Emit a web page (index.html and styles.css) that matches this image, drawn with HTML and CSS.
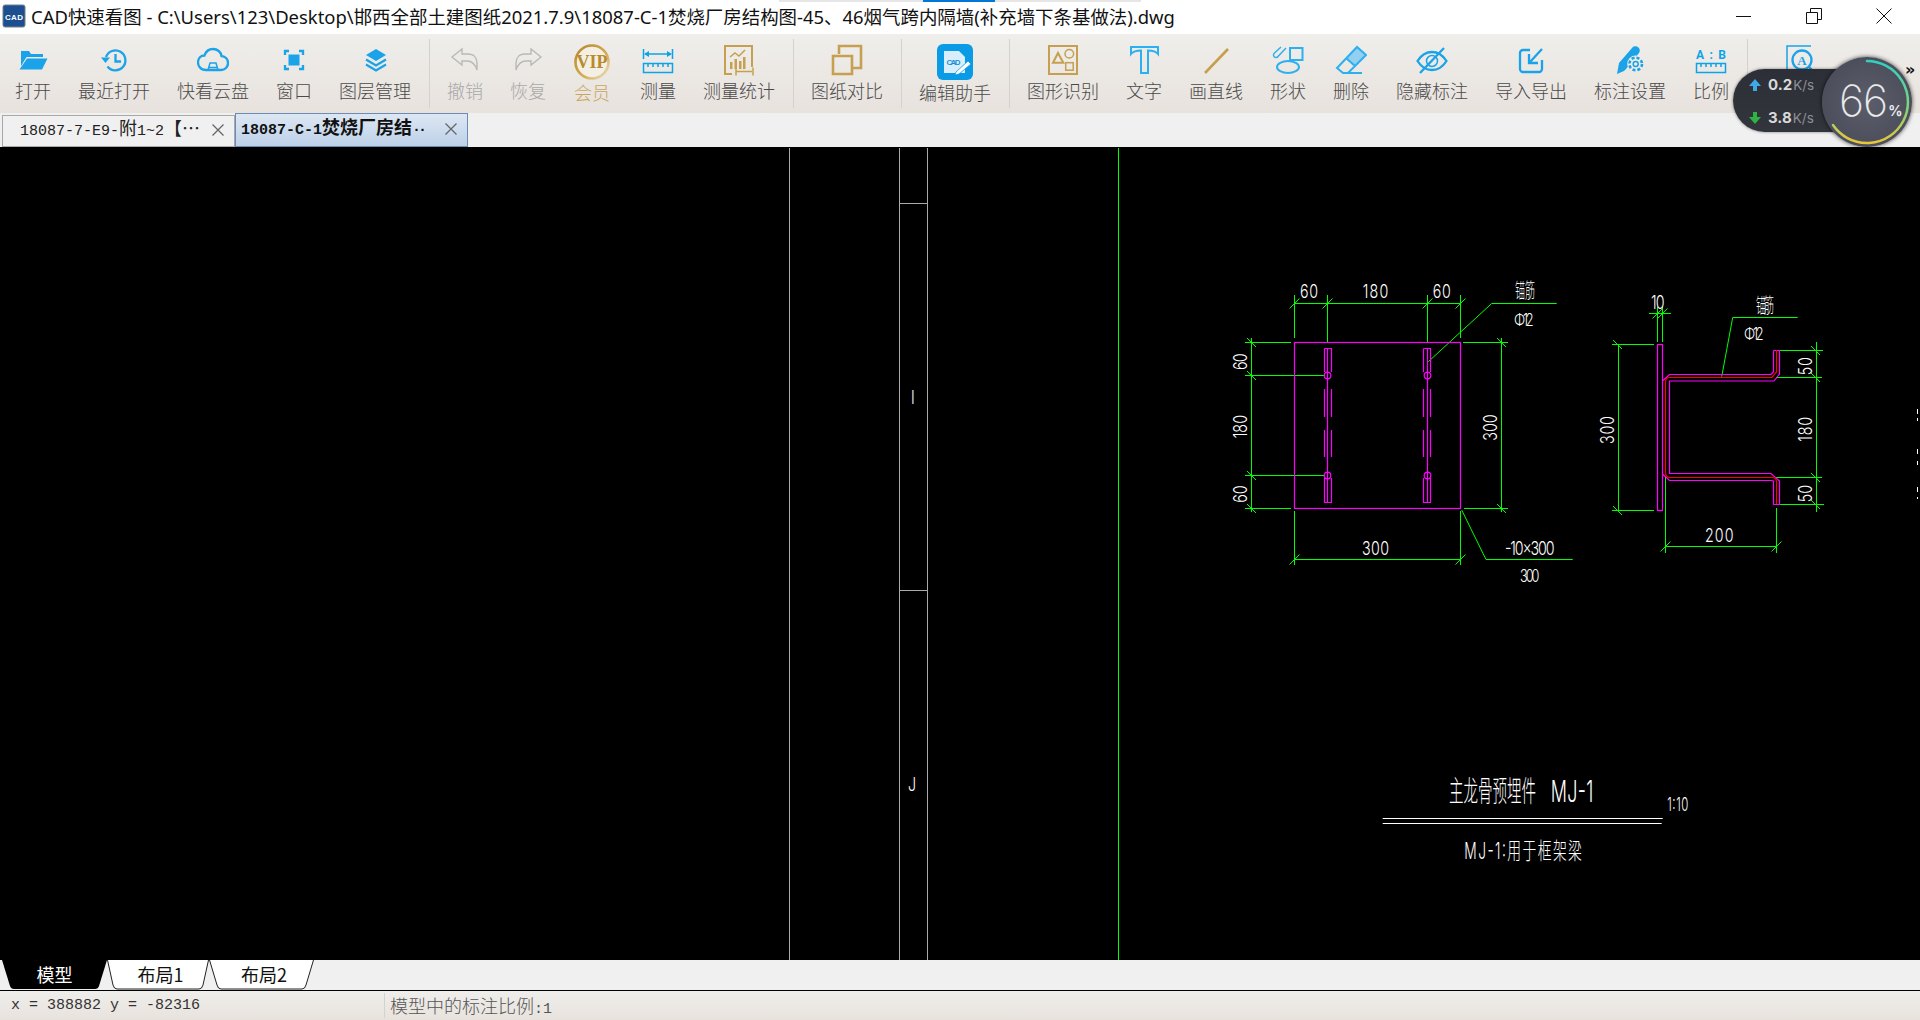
FILE: index.html
```html
<!DOCTYPE html>
<html lang="zh">
<head>
<meta charset="utf-8">
<title>CAD快速看图</title>
<link rel="stylesheet" href="styles.css">
</head>
<body>
<div class="app">
  <header class="titlebar">
    <svg class="appicon" width="24" height="24" viewBox="0 0 24 24"><rect x="1" y="1" width="22" height="22" rx="2" fill="#1c4f8f" stroke="#74808c"/><text x="12" y="16" class="appicon-t" textLength="18">CAD</text></svg>
    <div class="title">CAD快速看图 - C:\Users\123\Desktop\邯西全部土建图纸2021.7.9\18087-C-1焚烧厂房结构图-45、46烟气跨内隔墙(补充墙下条基做法).dwg</div>
    <div class="winctl">
      <svg width="16" height="16" viewBox="0 0 16 16"><path d="M0 8.500H15" class="wc"/></svg>
      <svg width="16" height="16" viewBox="0 0 16 16"><path d="M.5 4.500H11.500V15.500H.5zM4.500 4.500V.5H15.500V11.500H11.500" class="wc"/></svg>
      <svg width="16" height="16" viewBox="0 0 16 16"><path d="M.5 .5L15.500 15.500M15.500 .5L.5 15.500" class="wc"/></svg>
    </div>
  </header>

  <nav class="toolbar">
    <div class="tool"><svg class="ic" width="32" height="36" viewBox="0 0 32 36"><path d="M4 7h8l2 3h12v3H9.500L4 22z" class="fb"/><path d="M10 14.500H30.500L25 25.500H2.500z" class="fb"/></svg><span>打开</span></div>
    <div class="tool"><svg class="ic" width="32" height="36" viewBox="0 0 32 36"><path d="M8 13A10 10 0 1 1 9.500 22.500" class="sb"/><path d="M3 13.500H12L7.500 19z" class="fb"/><path d="M17.500 10V17.500H23" class="sb"/></svg><span>最近打开</span></div>
    <div class="tool"><svg class="ic" width="32" height="36" viewBox="0 0 32 36"><path d="M9 26C3 26 1 21 1 18.500C1 14 4 11.500 7.500 11.500C9 7 12.500 5 16 5C20.500 5 24 8 24.500 12C28.500 12.500 31 15.500 31 19C31 23 28 26 24 26Z" class="sb"/><path d="M11 26l2-7h6l2 7M12 23.500h8" class="sb thin"/></svg><span>快看云盘</span></div>
    <div class="tool"><svg class="ic" width="32" height="36" viewBox="0 0 32 36"><path d="M7 11V7H11M21 7H25V11M25 21V25H21M11 25H7V21" class="sb"/><rect x="10.500" y="10.500" width="11" height="11" class="fb"/></svg><span>窗口</span></div>
    <div class="tool"><svg class="ic" width="32" height="36" viewBox="0 0 32 36"><path d="M17 5L27 11L17 17L7 11z" class="fb"/><path d="M7 15.500l10 6 10-6M7 20.500l10 6 10-6" class="sb"/></svg><span>图层管理</span></div>
    <i class="sep"></i>
    <div class="tool off"><svg class="ic" width="32" height="36" viewBox="0 0 32 36"><path d="M3 13L13 5V10H19C25 10 28 14 28 19V26C26 20 22 17 18 17H13V21Z" class="sg"/></svg><span>撤销</span></div>
    <div class="tool off"><svg class="ic" width="32" height="36" viewBox="0 0 32 36"><path d="M29 13L19 5V10H13C7 10 4 14 4 19V26C6 20 10 17 14 17H19V21Z" class="sg"/></svg><span>恢复</span></div>
    <div class="tool gold low"><svg class="ic" width="36" height="36" viewBox="0 0 36 36"><defs><linearGradient id="vipg" x1="0" y1="0" x2="1" y2="1"><stop offset="0" stop-color="#b8862c"/><stop offset=".6" stop-color="#d4ad55"/><stop offset="1" stop-color="#ece0c4"/></linearGradient></defs><circle cx="18" cy="18" r="16.500" class="vipring"/><text x="18" y="24" class="vip" textLength="31" lengthAdjust="spacingAndGlyphs">VIP</text></svg><span>会员</span></div>
    <div class="tool"><svg class="ic" width="32" height="36" viewBox="0 0 32 36"><path d="M1.500 5V15M30.500 5V15M3 10H29" class="sc thin"/><path d="M2 10L7 7V13zM30 10L25 7V13z" class="fc"/><path d="M1.500 19.500H30.500V28.500H1.500zM6 19.500V23M11 19.500V23M16 19.500V23M21 19.500V23M26 19.500V23" class="sc thin"/></svg><span>测量</span></div>
    <div class="tool"><svg class="ic" width="32" height="36" viewBox="0 0 32 36"><path d="M9 30H2V2H29V23" class="sy"/><path d="M7 18h2.500v7H7zM11.500 15h2.500v10h-2.500zM16 17h2.500v8H16zM20 13h2.500v12H20z" class="fy"/><path d="M7 13l5-4 4 3 6-6" class="sy thin"/><path d="M13 27.500H29M13 23.500v8M30 23.500v8" class="sy thin"/></svg><span>测量统计</span></div>
    <i class="sep"></i>
    <div class="tool"><svg class="ic" width="32" height="36" viewBox="0 0 32 36"><path d="M8 10V2H30V24H22" class="sy wide"/><path d="M2 12H21V30H2z" class="sy wide"/></svg><span>图纸对比</span></div>
    <i class="sep"></i>
    <div class="tool low"><svg class="ic" width="36" height="36" viewBox="0 0 36 36"><rect width="36" height="36" rx="6" class="edit"/><path d="M7 7H22L28 13V29H7z" class="docw"/><text x="16.500" y="20.500" class="cadmini" textLength="14">CAD</text><path d="M19 28L31 17L34 20L22 30L18 31z" class="penw"/></svg><span>编辑助手</span></div>
    <i class="sep"></i>
    <div class="tool"><svg class="ic" width="32" height="36" viewBox="0 0 32 36"><rect x="2" y="2" width="28" height="28" class="sy"/><path d="M6 18.700L11 9L16.300 18.700z" class="sy"/><circle cx="22.300" cy="9.800" r="4.300" class="sy thin"/><rect x="18.700" y="18.700" width="7.500" height="7.500" class="sy thin"/></svg><span>图形识别</span></div>
    <div class="tool"><svg class="ic" width="32" height="36" viewBox="0 0 32 36"><path d="M3 3H30V10C28 7.500 26 6.500 20 6.500V29H13V6.500C7 6.500 5 7.500 3 10Z" class="sb lt"/></svg><span>文字</span></div>
    <div class="tool"><svg class="ic" width="32" height="36" viewBox="0 0 32 36"><path d="M5 29L28 5" class="sy wide"/></svg><span>画直线</span></div>
    <div class="tool"><svg class="ic" width="32" height="36" viewBox="0 0 32 36"><rect x="18" y="4" width="12.500" height="12" class="sb lt"/><ellipse cx="16" cy="23" rx="11" ry="6" class="sb lt"/><path d="M14 4L6 12.500a2.500 2.500 0 1 1-3.500-3.500L9 3" class="sb lt thin"/></svg><span>形状</span></div>
    <div class="tool"><svg class="ic" width="32" height="36" viewBox="0 0 32 36"><path d="M11 14L22 3L31 11L20 22z" class="fhatch"/><path d="M2 24L22 3L31 11L13 29H8zM13 29H27M11 14L20 22" class="sb lt"/></svg><span>删除</span></div>
    <div class="tool"><svg class="ic" width="32" height="36" viewBox="0 0 32 36"><path d="M1.500 17C6 10 11 8 16 8C21 8 26 10 30.500 17C26 24 21 26 16 26C11 26 6 24 1.500 17Z" class="sb"/><circle cx="16" cy="17" r="5.500" class="sb thin"/><path d="M4 29L28 4" class="sb"/></svg><span>隐藏标注</span></div>
    <div class="tool"><svg class="ic" width="32" height="36" viewBox="0 0 32 36"><path d="M15 6H8a3 3 0 0 0-3 3V25a3 3 0 0 0 3 3H24a3 3 0 0 0 3-3V16" class="sb"/><path d="M27 5L15 18M14 10V19H23" class="sb"/></svg><span>导入导出</span></div>
    <div class="tool"><svg class="ic" width="32" height="36" viewBox="0 0 32 36"><path d="M3 30L5 19L18 4a3.500 3.500 0 0 1 7 5L12 25L10 27z" class="fb"/><circle cx="21.700" cy="20" r="8.500" class="gear"/><circle cx="21.700" cy="20" r="6.300" class="sb cog"/><circle cx="21.700" cy="20" r="2.500" class="sb thin"/></svg><span>标注设置</span></div>
    <div class="tool"><svg class="ic" width="32" height="36" viewBox="0 0 32 36"><text x="1" y="15" class="ab" textLength="30">A:B</text><path d="M1.500 19.500H30.500V28.500H1.500zM6 19.500V23M11 19.500V23M16 19.500V23M21 19.500V23M26 19.500V23" class="sc thin"/></svg><span>比例</span></div>
    <i class="sep"></i>
    <div class="tool"><svg class="ic" width="32" height="36" viewBox="0 0 32 36"><path d="M26 2H2V26" class="sb thin"/><circle cx="17" cy="16" r="9.500" class="sb"/><path d="M24 23L30 29" class="sb"/><text x="17" y="20.500" class="aletter">A</text></svg><span>文字查找</span></div>
  </nav>

  <div class="doctabs">
    <div class="doctab"><span class="dt-text"><b class="m">18087-7-E9-</b>附<b class="m">1~2</b>【…</span><svg class="close" width="12" height="12" viewBox="0 0 12 12"><path d="M.5 .5L11.500 11.500M11.500 .5L.5 11.500"/></svg></div>
    <div class="doctab active"><span class="dt-text"><b class="m">18087-C-1</b>焚烧厂房结<b class="m dots">··</b></span><svg class="close" width="12" height="12" viewBox="0 0 12 12"><path d="M.5 .5L11.500 11.500M11.500 .5L.5 11.500"/></svg></div>
  </div>

  <main class="canvas">
    <svg class="drawing" width="1920" height="813" viewBox="0 147 1920 813">
      <defs><path id="tk" d="M-5 5L5-5"/></defs>
      <g class="gray">
        <path d="M789.500 148V960M899.500 148V960M927.500 148V960M900 203.500H927M900 590.500H927"/>
      </g>
      <path class="green" d="M1118.500 148V960"/>
      <text class="cad" transform="translate(911 404) scale(.75 1)" >I</text>
      <text class="cad" transform="translate(908 791) scale(.75 1)" >J</text>

      <g class="green">
        <path d="M1294.500 303.500H1460.500M1294.500 295V338M1327.500 295V342M1427.500 295V342M1460.500 295V338"/>
        <path d="M1251.500 338V512M1245 342.500H1291M1245 375.500H1325M1245 475.500H1325M1245 508.500H1291"/>
        <path d="M1501.500 338V512M1463 342.500H1508M1464 508.500H1508"/>
        <path d="M1294.500 511V565M1460.500 511V565M1294.500 559.500H1460.500"/>
        <path d="M1428.300 361.700L1491.700 303.500H1556.700M1461.700 510L1486 559.500H1572.700"/>
        <use href="#tk" x="1294.500" y="303.500"/><use href="#tk" x="1327.500" y="303.500"/><use href="#tk" x="1427.500" y="303.500"/><use href="#tk" x="1460.500" y="303.500"/>
        <use href="#tk" x="1294.500" y="559.500"/><use href="#tk" x="1460.500" y="559.500"/>
        <path d="M1247 338L1256 347M1247 371L1256 380M1247 471L1256 480M1247 504L1256 513M1497 338L1506 347M1497 504L1506 513"/>
      </g>
      <g class="magenta">
        <rect x="1294.500" y="342.500" width="166" height="166"/>
        <path d="M1324.500 348.500H1331.500V372M1324.500 348.500V372M1324.500 478V502.500H1331.500V478M1327.500 348V502M1324.500 389V417M1331.500 389V417M1324.500 430V457M1331.500 430V457"/>
        <path d="M1423.500 348.500H1430.500V372M1423.500 348.500V372M1423.500 478V502.500H1430.500V478M1427.500 348V502M1423.500 389V417M1430.500 389V417M1423.500 430V457M1430.500 430V457"/>
        <circle cx="1327.500" cy="375.500" r="3.300"/><circle cx="1327.500" cy="475.500" r="3.300"/>
        <circle cx="1427.500" cy="375.500" r="3.300"/><circle cx="1427.500" cy="475.500" r="3.300"/>
      </g>
      <g class="cad">
        <text transform="translate(1300 298) scale(.75 1)" textLength="24">60</text>
        <text transform="translate(1362.700 298) scale(.75 1)" textLength="34">180</text>
        <text transform="translate(1432.700 298) scale(.75 1)" textLength="24">60</text>
        <text transform="translate(1515 298) scale(.5 1)" textLength="40" class="cjk">锚筋</text>
        <text transform="translate(1514 325.700) scale(.75 1)" textLength="26" class="sm">Φ12</text>
        <text transform="translate(1246.700 370) rotate(-90) scale(.75 1)" textLength="22">60</text>
        <text transform="translate(1246.700 438.300) rotate(-90) scale(.75 1)" textLength="31">180</text>
        <text transform="translate(1246.700 502.700) rotate(-90) scale(.75 1)" textLength="23">60</text>
        <text transform="translate(1496.700 440.700) rotate(-90) scale(.75 1)" textLength="35">300</text>
        <text transform="translate(1362 555) scale(.75 1)" textLength="36">300</text>
        <text transform="translate(1505 555) scale(.75 1)" textLength="66">-10x300</text>
        <text transform="translate(1520 581.700) scale(.75 1)" textLength="26" class="sm">300</text>
      </g>

      <g class="green">
        <path d="M1649 313.500H1671M1657.500 307V342M1662.500 307V342"/>
        <use href="#tk" x="1657.500" y="313.500"/><use href="#tk" x="1662.500" y="313.500"/>
        <path d="M1618.500 344V511M1612 344.500H1654M1612 510.500H1654"/>
        <path d="M1613 340L1622 349M1613 506L1622 515"/>
        <path d="M1816.500 342V512M1776 350.500H1823M1776 377.500H1822M1776 477.500H1822M1780 504.500H1824"/>
        <path d="M1811 346L1820 355M1811 373L1820 382M1811 473L1820 482M1811 500L1820 509"/>
        <path d="M1665.500 477V553M1776.500 508V553M1665.500 546.500H1776.500"/>
        <use href="#tk" x="1665.500" y="546.500"/><use href="#tk" x="1776.500" y="546.500"/>
        <path d="M1721.700 376.700L1732.700 317.500H1797.700"/>
      </g>
      <g class="magenta">
        <rect x="1657.500" y="344.500" width="5" height="166"/>
        <path d="M1773.500 350.500H1779.500V374L1774 381H1669.500V473.500H1771L1779.500 481V504.500H1773.500V481L1771 480.500H1669.500L1662.500 474M1773.500 350.500V372L1771 374.500H1669.500L1662.500 381"/>
      </g>
      <path class="red" d="M1776.500 350V372L1772 377.500H1670C1667 377.500 1665.500 379 1665.500 382V472C1665.500 475.500 1667 477.500 1670 477.500H1772C1775 477.500 1776.500 479 1776.500 482V504"/>
      <g class="cad">
        <text transform="translate(1651 309.300) scale(.75 1)" textLength="18">10</text>
        <text transform="translate(1756 312.700) scale(.5 1)" textLength="36" class="cjk">锚筋</text>
        <text transform="translate(1744 340) scale(.75 1)" textLength="26" class="sm">Φ12</text>
        <text transform="translate(1614 444) rotate(-90) scale(.75 1)" textLength="37">300</text>
        <text transform="translate(1705 541.700) scale(.75 1)" textLength="38">200</text>
        <text transform="translate(1811.700 375.300) rotate(-90) scale(.75 1)" textLength="24">50</text>
        <text transform="translate(1811.700 441.700) rotate(-90) scale(.75 1)" textLength="33">180</text>
        <text transform="translate(1811.700 502.300) rotate(-90) scale(.75 1)" textLength="23">50</text>
      </g>
      <path class="white" d="M1917.500 409V414M1917.500 418V421M1917.500 449V454M1917.500 461V465M1917.500 487V492M1917.500 497V499"/>

      <path class="white" d="M1382.700 818.500H1662.700M1382.700 823.500H1661.700"/>
      <g class="cad">
        <text transform="translate(1449 802) scale(.5 1)" textLength="174" class="big cjk">主龙骨预埋件</text>
        <text transform="translate(1550.700 802) scale(.6 1)" textLength="71" class="big">MJ-1</text>
        <text transform="translate(1667.300 810.700) scale(.6 1)" textLength="35">1:10</text>
        <text transform="translate(1464.300 859) scale(.6 1)" textLength="196" class="mid">MJ-1:用于框架梁</text>
      </g>
    </svg>
  </main>

  <div class="sheettabs">
    <div class="sheet s1"><svg class="sheet-bg" width="105" height="30" viewBox="0 0 105 30"><path d="M0 0H105L97 26Q96 29 93 29H12Q9 29 8 26Z" class="sh-black"/></svg><span class="lbl on">模型</span></div>
    <div class="sheet s2"><svg class="sheet-bg" width="102" height="30" viewBox="0 0 102 30"><path d="M.5 0L6 25Q7 29 10 29H92Q95 29 96 25L101.500 0" class="sh-white"/></svg><span class="lbl">布局1</span></div>
    <div class="sheet s3"><svg class="sheet-bg" width="105" height="30" viewBox="0 0 105 30"><path d="M.5 0L8 25Q9 29 12 29H93Q96 29 97 25L104.500 0" class="sh-white"/></svg><span class="lbl">布局2</span></div>
  </div>

  <footer class="status">
    <div class="coords">x = 388882 y = -82316</div>
    <div class="scale">模型中的标注比例<b class="m">:1</b></div>
  </footer>

  <div class="more">»</div>
  <aside class="speed">
    <div class="rate"><svg width="14" height="14" viewBox="0 0 14 14"><path d="M7 1L13 8H9V13H5V8H1z" class="up"/></svg><b>0.2</b><small>K/s</small></div>
    <div class="rate"><svg width="14" height="14" viewBox="0 0 14 14"><path d="M7 13L13 6H9V1H5V6H1z" class="down"/></svg><b>3.8</b><small>K/s</small></div>
    <div class="dial">
      <svg width="90" height="90" viewBox="0 0 90 90">
        <defs><linearGradient id="arc" x1="0" y1="0" x2="0" y2="1"><stop offset="0" stop-color="#30d0c0"/><stop offset=".55" stop-color="#7cd67c"/><stop offset="1" stop-color="#e8c63a"/></linearGradient></defs>
        <path d="M45 4A41 41 0 1 1 11 68" class="arc"/>
      </svg>
      <div class="pct">66<small>%</small></div>
    </div>
  </aside>
</div>
</body>
</html>
```

FILE: styles.css
```css
* { box-sizing: border-box; }
html, body { margin: 0; padding: 0; }
body { width: 1920px; height: 1020px; overflow: hidden; background: #f0f0f0; }
.app { position: relative; display: flex; flex-direction: column; width: 1920px; height: 1020px; font-family: "Liberation Serif", "Noto Sans CJK SC", serif; }
b { font-weight: inherit; }

.titlebar { height: 34px; flex: none; display: flex; align-items: center; background: #fff; padding-left: 2px; padding-bottom: 2px; position: relative; }
.titlebar::before { content: ""; position: absolute; left: 779px; top: 0; width: 362px; height: 2px; background: linear-gradient(90deg, #e6e6e6 0 144px, #0078d7 144px 216px, #e6e6e6 216px); }
.appicon { flex: none; }
.appicon-t { font: 700 8px "Liberation Sans", sans-serif; fill: #fff; text-anchor: middle; }
.title { margin-left: 5px; font: 18.45px "Noto Sans", "Noto Sans CJK SC", sans-serif; color: #111; white-space: nowrap; flex: 1; }
.winctl { display: flex; gap: 54px; padding-right: 28px; align-items: center; }
.wc { fill: none; stroke: #111; stroke-width: 1; }

.toolbar { height: 79px; flex: none; display: flex; padding-left: 1.5px; background: linear-gradient(180deg, #efeeeb, #e8e2dd); }
.tool { flex: none; display: flex; flex-direction: column; align-items: center; padding: 10px 13.5px 0; font-size: 18px; line-height: 18px; color: #4a4a4a; font-family: "Noto Sans CJK SC", sans-serif; font-weight: 300; }
.tool span { margin-top: 1px; white-space: nowrap; }
.tool.low span { margin-top: 3px; }
.tool.off { color: #a9a9a9; }
.tool.gold { color: #c9a55e; margin-left: 1px; margin-right: 3px; }
.ic { display: block; flex: none; }
.sep { flex: none; width: 1px; height: 69px; margin: 5px 4px 0; background: #d4d2cf; }

.fb { fill: #1aa3e8; }
.sb { fill: none; stroke: #1aa3e8; stroke-width: 2.3; }
.sb.lt { stroke: #2cb0ef; stroke-width: 2; }
.sb.thin, .sc.thin, .sy.thin { stroke-width: 1.5; }
.sb.cog { stroke-width: 2.6; stroke-dasharray: 3 1.95; }
.sc { fill: none; stroke: #0aa5e8; stroke-width: 2; }
.fc { fill: #0aa5e8; }
.sg { fill: none; stroke: #b9b9b9; stroke-width: 1.4; }
.sy { fill: none; stroke: #c6a050; stroke-width: 2; }
.sy.wide { stroke-width: 2.6; }
.fy { fill: #c6a050; }
.vipring { fill: #f4efe4; stroke: url(#vipg); stroke-width: 2.6; }
.vip { font: 700 18px "Liberation Serif", serif; fill: #b98b2c; text-anchor: middle; }
.edit { fill: #0a9be6; }
.docw { fill: #d9eefb; }
.cadmini { font: 700 8px "Liberation Sans", sans-serif; fill: #1a8fd8; text-anchor: middle; }
.penw { fill: #fff; stroke: #0a9be6; stroke-width: .8; }
.fhatch { fill: #93cff0; }
.gear { fill: #eeebe7; }
.ab { font: 700 12px "Roboto", sans-serif; fill: #0aa5e8; }
.aletter { font: 700 13px "Liberation Serif", serif; fill: #1aa3e8; text-anchor: middle; }

.doctabs { height: 34px; flex: none; display: flex; align-items: flex-end; padding-left: 2px; background: #f0f0f0; }
.doctab { width: 233px; height: 32px; display: flex; align-items: center; justify-content: space-between; padding: 0 10px 3px 17px; background: #f0f0f0; border: 1px solid #a8a8a8; font-family: "Noto Sans CJK SC", serif; font-size: 18px; line-height: 24px; color: #222; white-space: nowrap; }
.doctab .m { font-family: "Liberation Mono", monospace; font-size: 15px; }
.doctab .m.dots { letter-spacing: -3px; }
.doctab.active { height: 34px; padding: 0 10px 3px 5px; background: linear-gradient(180deg, #dde7f3, #bdd1e9); border-color: #6c8cb8; font-weight: 700; color: #111; }
.close { flex: none; }
.close path { fill: none; stroke: #666; stroke-width: 1.3; }
.dt-text { overflow: hidden; }

.canvas { height: 813px; flex: none; background: #000; overflow: hidden; }
.drawing { display: block; }
.gray path { fill: none; stroke: #aaa; stroke-width: 1; }
.green, .green path, .green use { fill: none; stroke: #00ff00; stroke-width: 1; }
.magenta rect, .magenta path, .magenta circle { fill: none; stroke: #ff00ff; stroke-width: 1.2; }
.red { fill: none; stroke: #ff0000; stroke-width: 1.2; }
.white { fill: none; stroke: #fff; stroke-width: 1; }
.cad, .cad text { font: 300 19px "Inter", "Noto Sans CJK SC", sans-serif; fill: #fff; }
.cad text.sm { font-size: 17px; }
.cad text.mid { font-size: 23px; }
.cad text.big { font-size: 30px; }
.cad text.cjk { font-size: 20px; font-family: "Noto Sans CJK SC", sans-serif; }
.cad text.big.cjk { font-size: 29px; }

.sheettabs { height: 31px; flex: none; display: flex; padding-left: 2px; background: #f0f0f0; border-bottom: 1px solid #000; }
.sheet { position: relative; display: flex; align-items: center; justify-content: center; height: 30px; font: 18px "Noto Sans CJK SC", sans-serif; color: #111; padding-bottom: 2px; }
.s1 { width: 105px; }
.s2, .s3 { padding-left: 5px; }
.s2 { width: 102px; }
.s3 { width: 105px; }
.sheet-bg { position: absolute; left: 0; top: 0; }
.sh-black { fill: #000; }
.sh-white { fill: #fff; stroke: #222; stroke-width: 1; }
.lbl { position: relative; line-height: 28px; }
.lbl.on { color: #fff; }

.status { height: 29px; flex: none; display: flex; align-items: center; background: linear-gradient(180deg, #efeeeb, #e8e2dd); }
.coords { width: 385px; height: 25px; padding-left: 11px; font: 15px/25px "Liberation Mono", monospace; color: #333; border-right: 1px solid #d4d2cf; }
.scale { padding-left: 5px; font: 18px/25px "Noto Sans CJK SC", sans-serif; font-weight: 300; color: #555; }
.scale .m { font: 15px "Liberation Mono", monospace; }

.more { position: absolute; left: 1905px; top: 60px; font: 700 16px "DejaVu Sans", sans-serif; color: #111; }
.speed { position: absolute; left: 1733px; top: 69px; width: 140px; height: 63px; padding: 5px 0 0 15px; border-radius: 32px 0 0 32px; background: linear-gradient(180deg, #2c2f37, #33353c); box-shadow: 0 0 3px rgba(0,0,0,.5); display: flex; flex-direction: column; gap: 12px; font-family: "Inter", "Roboto", sans-serif; }
.rate { display: flex; align-items: center; height: 21px; }
.rate svg { margin-right: 6px; }
.rate b { font-size: 15px; font-weight: 700; color: #d9d9d9; }
.rate small { font-size: 13.5px; color: #8d8f96; margin-left: 1px; }
.up { fill: #3fa9e6; }
.down { fill: #2fb344; }
.dial { position: absolute; left: 89px; top: -12px; width: 90px; height: 90px; border-radius: 50%; background: radial-gradient(circle, #5b5e6a 0, #4c4f5b 70%, #3a3c46 100%); box-shadow: 0 0 4px rgba(0,0,0,.7); }
.dial svg { position: absolute; left: 0; top: 0; }
.arc { fill: none; stroke: url(#arc); stroke-width: 2.5; stroke-linecap: round; }
.pct { position: absolute; left: 17px; top: 20px; font: 200 43px/46px "Inter", "Roboto", sans-serif; color: #e9e9ea; white-space: nowrap; letter-spacing: -1px; }
.pct small { font-size: 14px; font-weight: 700; margin-left: 1px; letter-spacing: 0; }
```
